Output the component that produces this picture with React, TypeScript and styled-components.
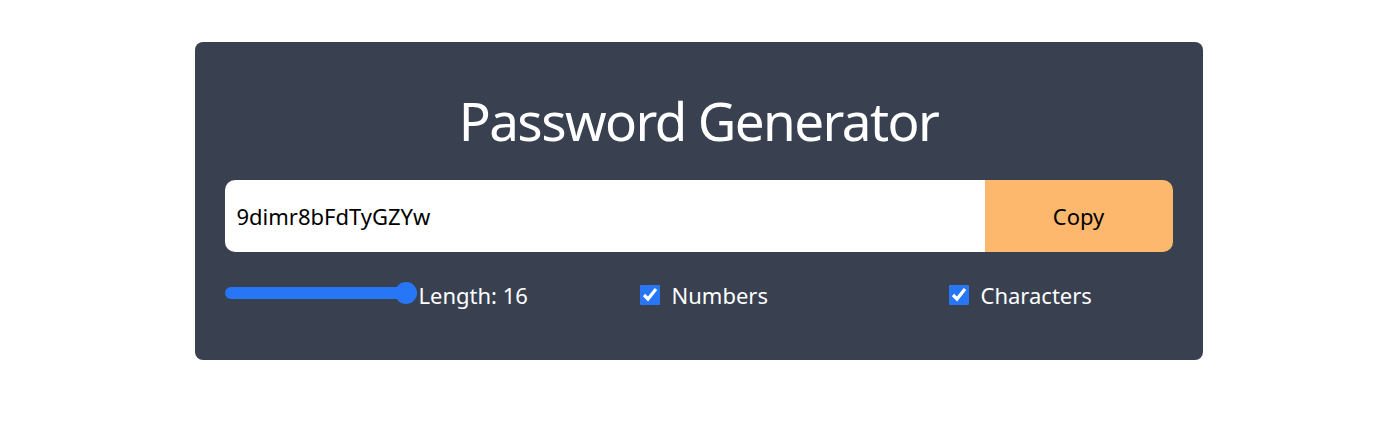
import React, { useState } from "react";
import styled, { createGlobalStyle } from "styled-components";

const Global = createGlobalStyle`
  html, body { margin: 0; padding: 0; background: #ffffff; }
  body { font-family: "Noto Sans", "Open Sans", sans-serif; }
  * { box-sizing: border-box; }
`;

const Card = styled.div`
  width: 1008px;
  margin: 42px auto 0;
  background: #394151;
  border-radius: 8px;
  padding: 52px 30px 54px;
  display: flex;
  flex-direction: column;
`;

const Title = styled.h1`
  margin: 0 0 33px;
  font-size: 53px;
  line-height: 53px;
  letter-spacing: -1.6px;
  font-weight: 400;
  color: #ffffff;
  text-align: center;
`;

const InputRow = styled.div`
  display: flex;
  height: 72px;
  border-radius: 10px;
  overflow: hidden;
`;

const PasswordField = styled.input`
  flex: 1;
  border: none;
  outline: none;
  padding: 0 12px;
  font-family: inherit;
  font-size: 22px;
  color: #000;
  background: #fff;
`;

const CopyButton = styled.button`
  width: 188px;
  border: none;
  background: #feb86e;
  font-family: inherit;
  font-size: 22px;
  color: #000;
  cursor: pointer;
`;

const Controls = styled.div`
  margin-top: 30px;
  display: grid;
  grid-template-columns: 415px 309px auto;
  align-items: center;
  height: 24px;
`;

const Group = styled.label`
  display: flex;
  align-items: center;
  gap: ${(p: { $gap: number }) => p.$gap}px;
  color: #ffffff;
  font-size: 22px;
  line-height: 24px;
`;

const Range = styled.input`
  -webkit-appearance: none;
  appearance: none;
  width: 192px;
  height: 22px;
  margin: 0 0 4px;
  background: transparent;
  &::-webkit-slider-runnable-track {
    height: 12px;
    background: #2776f6;
    border-radius: 6px;
  }
  &::-webkit-slider-thumb {
    -webkit-appearance: none;
    width: 22px;
    height: 22px;
    border-radius: 50%;
    background: #2776f6;
    margin-top: -5px;
    border: none;
  }
`;

const Check = styled.input`
  width: 20px;
  height: 20px;
  margin: 0;
  accent-color: #2776f6;
`;

export default function App() {
  const [length, setLength] = useState(16);
  const [numbers, setNumbers] = useState(true);
  const [chars, setChars] = useState(true);
  return (
    <>
      <Global />
      <Card>
        <Title>Password Generator</Title>
        <InputRow>
          <PasswordField readOnly value="9dimr8bFdTyGZYw" />
          <CopyButton>Copy</CopyButton>
        </InputRow>
        <Controls>
          <Group $gap={2}>
            <Range
              type="range"
              min={6}
              max={16}
              value={length}
              onChange={(e) => setLength(Number(e.target.value))}
            />
            <span>Length: {length}</span>
          </Group>
          <Group $gap={12}>
            <Check type="checkbox" checked={numbers} onChange={() => setNumbers(!numbers)} />
            <span>Numbers</span>
          </Group>
          <Group $gap={12}>
            <Check type="checkbox" checked={chars} onChange={() => setChars(!chars)} />
            <span>Characters</span>
          </Group>
        </Controls>
      </Card>
    </>
  );
}
